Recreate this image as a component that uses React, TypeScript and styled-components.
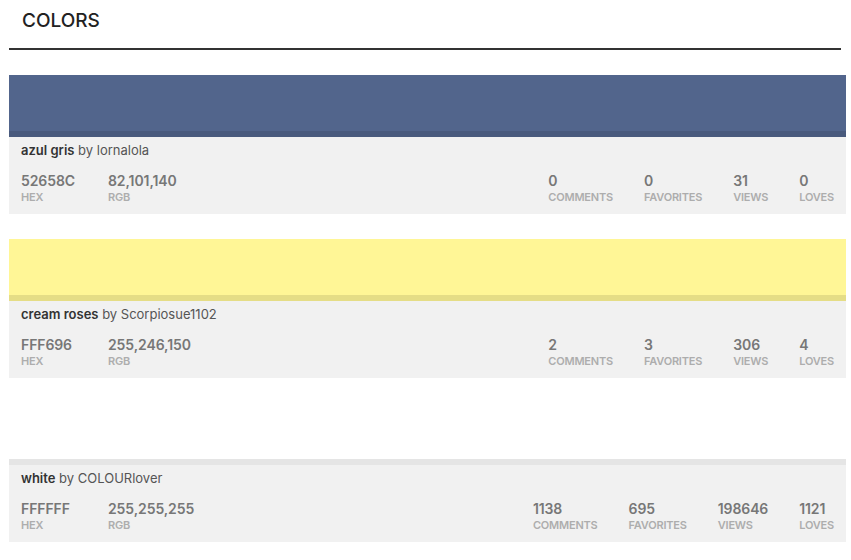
import styled, { createGlobalStyle } from "styled-components";

const GlobalStyle = createGlobalStyle`
    body {
        margin: 0;
        background: #ffffff;
        font-family: Inter, "Liberation Sans", sans-serif;
    }
`;

const Page = styled.div`
    padding: 0 5px 20px 9px;
`;

const Header = styled.div`
    margin-right: 5px;
    padding: 9px 0 0 13px;
    height: 39px;
    border-bottom: 2px solid #333333;
    margin-bottom: 25px;
`;

const Title = styled.h1`
    margin: 0;
    font-size: 19px;
    font-weight: 500;
    line-height: 24px;
    color: #222222;
`;

const List = styled.div`
    display: flex;
    flex-direction: column;
    gap: 25px;
`;

const Card = styled.div`
    display: flex;
    flex-direction: column;
`;

const Swatch = styled.div<{ $color: string }>`
    height: 62px;
    background: ${(p) => p.$color};
    box-shadow: inset 0 -6px 0 rgba(0, 0, 0, 0.1);
`;

const Info = styled.div`
    background: #f1f1f1;
    padding: 4px 12px 10px 12px;
`;

const Name = styled.div`
    font-size: 13px;
    line-height: 18px;
    color: #555555;

    b {
        font-weight: 600;
        color: #333333;
    }
`;

const StatsRow = styled.div`
    display: flex;
    align-items: flex-start;
    margin-top: 13px;
`;

const HexStat = styled.div`
    width: 87px;
`;

const Spacer = styled.div`
    flex: 1;
`;

const Stat = styled.div<{ $first?: boolean }>`
    margin-left: ${(p) => (p.$first ? "0" : "31px")};
`;

const Value = styled.div`
    font-size: 14px;
    font-weight: 600;
    line-height: 18px;
    color: #777777;
    letter-spacing: -0.1px;
`;

const Label = styled.div`
    font-size: 11px;
    font-weight: 600;
    line-height: 14px;
    color: #adadad;
    text-transform: uppercase;
    letter-spacing: -0.2px;
`;

interface ColorItem {
    name: string;
    author: string;
    hex: string;
    rgb: string;
    comments: number;
    favorites: number;
    views: number;
    loves: number;
}

const colors: ColorItem[] = [
    { name: "azul gris", author: "lornalola", hex: "52658C", rgb: "82,101,140", comments: 0, favorites: 0, views: 31, loves: 0 },
    { name: "cream roses", author: "Scorpiosue1102", hex: "FFF696", rgb: "255,246,150", comments: 2, favorites: 3, views: 306, loves: 4 },
    { name: "white", author: "COLOURlover", hex: "FFFFFF", rgb: "255,255,255", comments: 1138, favorites: 695, views: 198646, loves: 1121 },
];

function StatBlock({ value, label, first }: { value: string | number; label: string; first?: boolean }) {
    return (
        <Stat $first={first}>
            <Value>{value}</Value>
            <Label>{label}</Label>
        </Stat>
    );
}

export default function App() {
    return (
        <>
            <GlobalStyle />
            <Page>
                <Header>
                    <Title>COLORS</Title>
                </Header>
                <List>
                    {colors.map((c) => (
                        <Card key={c.hex}>
                            <Swatch $color={`#${c.hex}`} />
                            <Info>
                                <Name>
                                    <b>{c.name}</b> by {c.author}
                                </Name>
                                <StatsRow>
                                    <HexStat>
                                        <Value>{c.hex}</Value>
                                        <Label>Hex</Label>
                                    </HexStat>
                                    <StatBlock value={c.rgb} label="RGB" first />
                                    <Spacer />
                                    <StatBlock value={c.comments} label="Comments" first />
                                    <StatBlock value={c.favorites} label="Favorites" />
                                    <StatBlock value={c.views} label="Views" />
                                    <StatBlock value={c.loves} label="Loves" />
                                </StatsRow>
                            </Info>
                        </Card>
                    ))}
                </List>
            </Page>
        </>
    );
}
